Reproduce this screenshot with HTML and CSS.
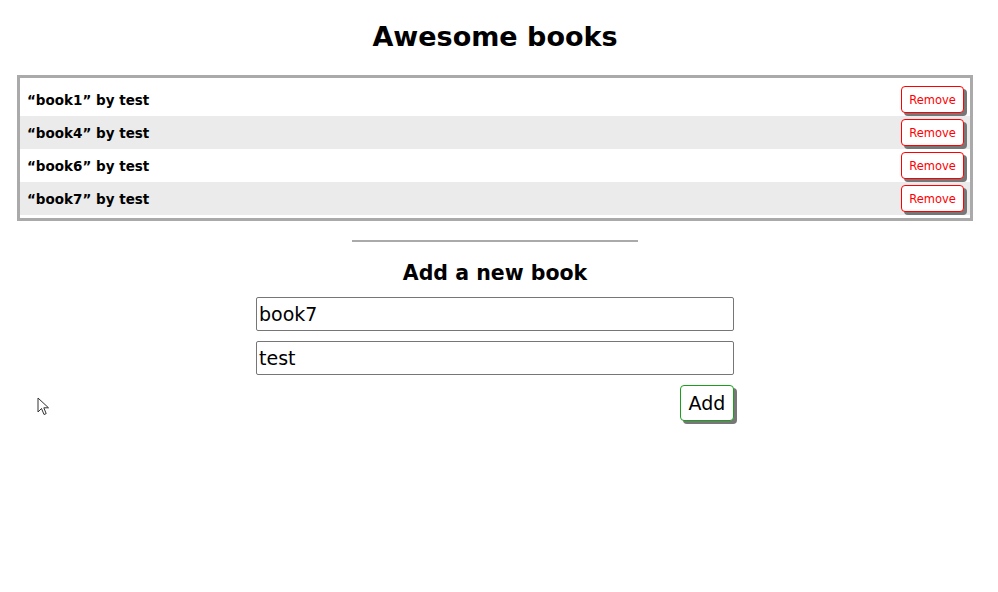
FILE: index.html
```html
<!DOCTYPE html>
<html lang="en">
<head>
<meta charset="utf-8">
<title>Awesome books</title>
<link rel="stylesheet" href="styles.css">
</head>
<body>
<main class="page">
  <h1 class="title">Awesome books</h1>
  <ul class="book-list">
    <li class="book-row"><span class="book-text">“book1” by test</span><button class="remove-btn">Remove</button></li>
    <li class="book-row alt"><span class="book-text">“book4” by test</span><button class="remove-btn">Remove</button></li>
    <li class="book-row"><span class="book-text">“book6” by test</span><button class="remove-btn">Remove</button></li>
    <li class="book-row alt"><span class="book-text">“book7” by test</span><button class="remove-btn">Remove</button></li>
  </ul>
  <hr class="divider">
  <h2 class="subtitle">Add a new book</h2>
  <form class="add-form">
    <input class="field" type="text" value="book7">
    <input class="field" type="text" value="test">
    <div class="actions"><button type="button" class="add-btn">Add</button></div>
  </form>
</main>
<svg class="cursor" width="14" height="20" viewBox="0 0 14 20" xmlns="http://www.w3.org/2000/svg">
  <path d="M1 1 L1 15 L4.5 11.5 L7 17.5 L9.2 16.6 L6.8 10.8 L11.5 10.8 Z" fill="#fff" stroke="#333" stroke-width="1" stroke-linejoin="miter"/>
</svg>
</body>
</html>
```
FILE: styles.css
```css
* { box-sizing: border-box; }
html, body { margin: 0; padding: 0; background: #fff; }
body {
  font-family: "Comic Sans MS", "DejaVu Sans", sans-serif;
  color: #000;
  width: 998px;
  height: 592px;
  overflow: hidden;
  position: relative;
}
.page {
  margin: 0 25px 0 17px;
  display: flex;
  flex-direction: column;
  align-items: center;
}
.title {
  font-size: 27px;
  font-weight: bold;
  margin: 18px 0 19px;
  line-height: 38px;
}
.book-list {
  list-style: none;
  margin: 0;
  padding: 5px 0 3px;
  width: 100%;
  border: 3px solid #aaa;
}
.book-row {
  display: flex;
  align-items: center;
  justify-content: space-between;
  height: 33px;
  padding: 0 6px 0 7px;
}
.book-row.alt { background: #ebebeb; }
.book-text {
  font-size: 13.5px;
  font-weight: bold;
}
.remove-btn {
  font-family: inherit;
  font-size: 11.5px;
  color: #f00;
  background: #fff;
  border: 1px solid #f00;
  border-radius: 4px;
  height: 27px;
  width: 63px;
  padding: 0;
  box-shadow: 3px 3px 0 #777;
}
.divider {
  width: 286px;
  height: 2px;
  border: 0;
  background: #aaa;
  margin: 19px 0 0;
}
.subtitle {
  font-size: 20.5px;
  font-weight: bold;
  margin: 16px 0 9px;
  line-height: 30px;
}
.add-form {
  width: 478px;
  display: flex;
  flex-direction: column;
  gap: 10px;
}
.field {
  width: 100%;
  height: 34px;
  border: 1px solid #767676;
  border-radius: 2px;
  padding: 0 2px;
  font-family: inherit;
  font-size: 19px;
  color: #000;
}
.actions {
  display: flex;
  justify-content: flex-end;
}
.add-btn {
  font-family: inherit;
  font-size: 19px;
  background: #fff;
  color: #000;
  border: 1px solid #1a9f1a;
  border-radius: 4px;
  width: 54px;
  height: 36px;
  padding: 0;
  box-shadow: 3px 3px 0 #777;
}
.cursor {
  position: absolute;
  left: 37px;
  top: 397px;
}
```
